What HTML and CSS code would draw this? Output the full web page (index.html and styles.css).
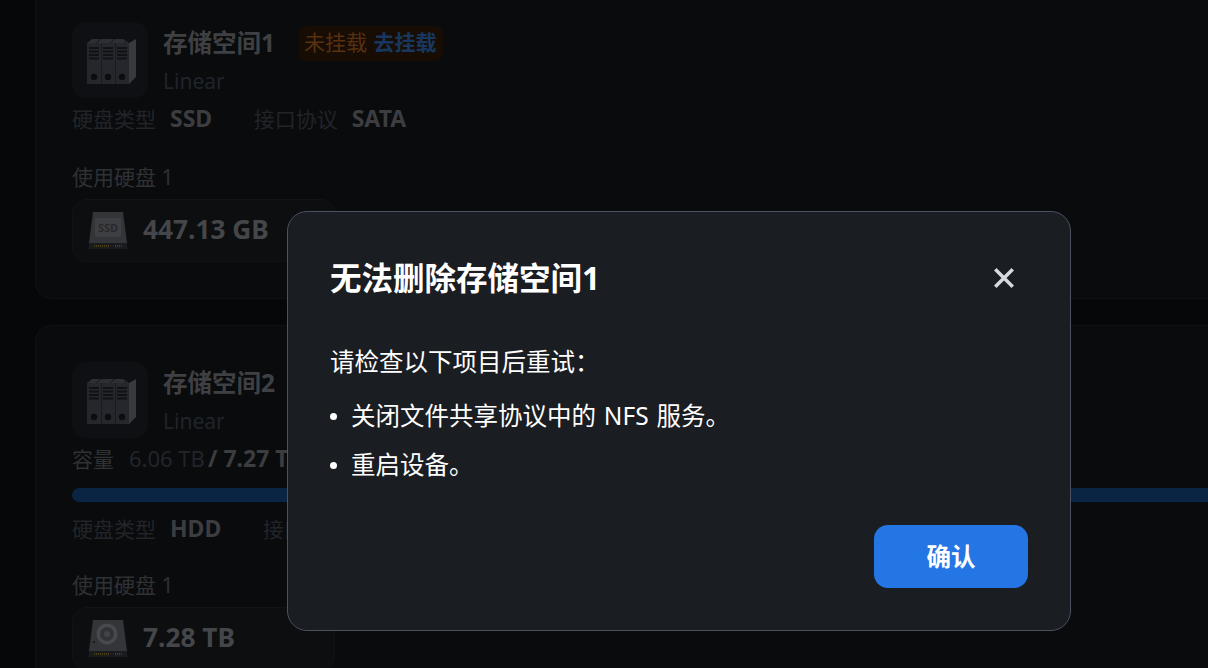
FILE: index.html
```html
<!DOCTYPE html>
<html lang="zh-CN">
<head>
    <meta charset="UTF-8">
    <meta name="viewport" content="width=device-width, initial-scale=1.0">
    <title>存储空间</title>
    <link rel="stylesheet" href="styles.css">
</head>
<body>
    <svg class="icon-defs" aria-hidden="true">
        <defs>
            <symbol id="books" viewBox="0 0 50 46">
                <path d="M0 5L5 1H36L42 5H0Z" fill="#2e2f34"/>
                <path d="M0 5H14V46H0ZM14.500 5H28V46H14.500ZM28.500 5H42V46H28.500Z" fill="#26272c"/>
                <path d="M14 1L9 5M28 1L23 5M42 1L37 5" stroke="#17181b" stroke-width="1"/>
                <path d="M42 5L49 1V39L42 46Z" fill="#37393f"/>
                <path d="M2 9H12V11H2ZM2 12.500H12V14.500H2ZM2 16H12V18H2ZM2 19.500H12V21.500H2ZM16 9H26V11H16ZM16 12.500H26V14.500H16ZM16 16H26V18H16ZM16 19.500H26V21.500H16ZM30 9H40V11H30ZM30 12.500H40V14.500H30ZM30 16H40V18H30ZM30 19.500H40V21.500H30Z" fill="#111216"/>
                <circle cx="7" cy="39" r="3.200" fill="#0c0d10"/>
                <circle cx="21" cy="39" r="3.200" fill="#0c0d10"/>
                <circle cx="35" cy="39" r="3.200" fill="#0c0d10"/>
            </symbol>
            <symbol id="disk-base" viewBox="0 0 38 38">
                <path d="M4 0H34L38 31V36Q38 37 36 37H2Q0 37 0 36V31Z" fill="#343539"/>
                <path d="M0 31H38V35Q38 37 36 37H2Q0 37 0 35Z" fill="#1a1b1f"/>
                <path d="M5 34H20M26 34H33" stroke="#5a4a14" stroke-width="1.500" stroke-dasharray="1 1" fill="none"/>
            </symbol>
        </defs>
    </svg>

    <div class="page">
        <section class="card">
            <div class="pool-head">
                <div class="pool-icon">
                    <svg class="books"><use href="#books"/></svg>
                </div>
                <div class="pool-text">
                    <div class="pool-title">
                        <h2>存储空间1</h2>
                        <span class="badge">未挂载 <b>去挂载</b></span>
                    </div>
                    <div class="pool-type">Linear</div>
                </div>
            </div>
            <div class="specs">
                <span class="label">硬盘类型</span><strong>SSD</strong>
                <span class="label">接口协议</span><strong>SATA</strong>
            </div>
            <div class="disks-title">使用硬盘 1</div>
            <div class="disk">
                <svg class="disk-icon" viewBox="0 0 38 38">
                    <use href="#disk-base" width="38" height="38"/>
                    <rect x="6" y="6" width="26" height="19" rx="1" fill="#3e3f43"/>
                    <text class="ssd-mark" x="19" y="20" text-anchor="middle">SSD</text>
                </svg>
                <span class="disk-size">447.13 GB</span>
            </div>
        </section>

        <section class="card">
            <div class="pool-head">
                <div class="pool-icon">
                    <svg class="books"><use href="#books"/></svg>
                </div>
                <div class="pool-text">
                    <div class="pool-title">
                        <h2>存储空间2</h2>
                    </div>
                    <div class="pool-type">Linear</div>
                </div>
            </div>
            <div class="capacity">
                <span class="label">容量</span><span class="used">6.06 TB</span><strong>/ 7.27 TB</strong>
            </div>
            <div class="bar"><div class="bar-fill" style="width: 83.36%"></div></div>
            <div class="specs specs-tight">
                <span class="label">硬盘类型</span><strong>HDD</strong>
                <span class="label">接口协议</span><strong>SATA</strong>
            </div>
            <div class="disks-title disks-title-tight">使用硬盘 1</div>
            <div class="disk">
                <svg class="disk-icon" viewBox="0 0 38 38">
                    <use href="#disk-base" width="38" height="38"/>
                    <circle cx="18" cy="14" r="10.500" fill="#48494d"/>
                    <circle cx="18" cy="14" r="7" fill="#323337"/>
                    <circle cx="18" cy="14" r="3" fill="#434448"/>
                    <circle cx="5" cy="22" r="1" fill="#0e0f12"/>
                </svg>
                <span class="disk-size">7.28 TB</span>
            </div>
        </section>
    </div>

    <div class="overlay">
        <div class="dialog">
            <div class="dialog-head">
                <h1>无法删除存储空间1</h1>
                <button class="close-button" aria-label="关闭">
                    <svg viewBox="0 0 22 22" width="22" height="22">
                        <path d="M3.500 3.500L18.500 18.500M18.500 3.500L3.500 18.500" stroke="#d5dade" stroke-width="3.500" stroke-linecap="square" fill="none"/>
                    </svg>
                </button>
            </div>
            <p class="dialog-lead">请检查以下项目后重试：</p>
            <ul class="dialog-list">
                <li>关闭文件共享协议中的 NFS 服务。</li>
                <li>重启设备。</li>
            </ul>
            <div class="dialog-foot">
                <button class="confirm-button">确认</button>
            </div>
        </div>
    </div>
</body>
</html>
```

FILE: styles.css
```css
html, body {
    height: 100%;
    overflow: hidden;
}

body {
    margin: 0;
    background-color: #060709;
    font-family: "Noto Sans", "Noto Sans CJK SC", sans-serif;
    font-size: 21px;
}

.icon-defs {
    display: none;
}

.page {
    width: 1500px;
    margin-top: -14px;
    margin-left: 36px;
    display: flex;
    flex-direction: column;
    gap: 28px;
}

.card {
    padding: 36px;
    background-color: #090b0d;
    border: 1px solid #101215;
    border-radius: 16px;
    margin: -1px;
}

.pool-head {
    display: flex;
    gap: 15px;
}

.pool-icon {
    width: 76px;
    height: 76px;
    background-color: #0e1013;
    border-radius: 14px;
    display: flex;
    align-items: center;
    justify-content: center;
}

.books {
    width: 50px;
    height: 46px;
    margin: 2px 0 0 3px;
}

.pool-text {
    padding-top: 4px;
}

.pool-title {
    display: flex;
    align-items: center;
    gap: 24px;
    height: 30px;
}

.pool-title h2 {
    margin: 0;
    font-size: 24.5px;
    font-weight: 700;
    color: #3f4043;
}

.badge {
    padding: 0 7px 0 5px;
    height: 35px;
    line-height: 33px;
    margin-top: 4px;
    background-color: #170d05;
    border-radius: 8px;
    color: #57310f;
}

.badge b {
    margin-left: 1px;
    color: #17375e;
}

.pool-type {
    margin-top: 11px;
    line-height: 28px;
    color: #20242b;
}

.specs {
    margin-top: 9px;
    line-height: 24px;
}

.specs-tight {
    margin-top: 15px;
}

.label {
    color: #212429;
    margin-right: 14px;
}

.specs strong, .capacity strong {
    font-size: 23px;
    line-height: 1;
    color: #3c3d40;
}

.specs strong {
    margin-right: 36px;
}

.capacity {
    margin-top: 9px;
    line-height: 24px;
}

.capacity .label {
    color: #2f3134;
    margin-right: 15px;
}

.used {
    font-size: 22px;
    line-height: 1;
    color: #22252b;
    margin-right: 3px;
}

.bar {
    margin-top: 17px;
    height: 14px;
    border-radius: 7px;
    background-color: #15171b;
    overflow: hidden;
}

.bar-fill {
    height: 100%;
    background-color: #0a2444;
    border-radius: 7px;
}

.disks-title {
    margin-top: 34px;
    line-height: 24px;
    color: #2f3134;
}

.disks-title-tight {
    margin-top: 32px;
}

.disk {
    margin-top: 10px;
    width: 263px;
    height: 63px;
    box-sizing: border-box;
    padding-left: 16px;
    display: flex;
    align-items: center;
    gap: 16px;
    background-color: #0c0e10;
    border: 1px solid #111316;
    border-radius: 14px;
}

.disk-icon {
    width: 38px;
    height: 38px;
}

.ssd-mark {
    font-size: 11px;
    font-weight: 700;
    fill: #28292c;
}

.disk-size {
    font-size: 26.25px;
    font-weight: 700;
    color: #454649;
    padding-bottom: 3px;
}

.overlay {
    position: fixed;
    top: 0;
    left: 0;
    width: 100%;
    height: 100%;
    box-sizing: border-box;
    padding: 174px 0 0 150px;
    display: flex;
    justify-content: center;
    align-items: center;
}

.dialog {
    width: 784px;
    height: 420px;
    box-sizing: border-box;
    padding: 42px;
    background-color: #1a1d21;
    border: 1px solid #4a5260;
    border-radius: 20px;
    color: #fff;
}

.dialog-head {
    display: flex;
    justify-content: space-between;
    align-items: center;
    height: 52px;
}

.dialog-head h1 {
    margin: -5px 0 0;
    font-size: 31.5px;
    font-weight: 700;
    line-height: 52px;
}

.close-button {
    width: 48px;
    height: 48px;
    margin-top: -4px;
    padding: 0;
    border: none;
    background: none;
    display: flex;
    align-items: center;
    justify-content: center;
    cursor: pointer;
}

.dialog-lead {
    margin: 37px 0 0;
    font-size: 24.5px;
    line-height: 38px;
}

.dialog-list {
    margin: 16px 0 0;
    padding: 0;
    list-style: none;
    font-size: 24.5px;
    line-height: 38px;
    word-spacing: 1.5px;
}

.dialog-list li {
    display: flex;
    align-items: center;
}

.dialog-list li::before {
    content: "";
    width: 7px;
    height: 7px;
    margin-right: 14px;
    border-radius: 50%;
    background-color: #fff;
}

.dialog-list li + li {
    margin-top: 11px;
}

.dialog-foot {
    margin-top: 41px;
    display: flex;
    justify-content: flex-end;
}

.confirm-button {
    width: 154px;
    height: 63px;
    padding: 0 0 2px;
    border: none;
    border-radius: 14px;
    background-color: #2376e4;
    color: #fff;
    font-family: inherit;
    font-size: 24.5px;
    font-weight: 700;
    cursor: pointer;
}
```
